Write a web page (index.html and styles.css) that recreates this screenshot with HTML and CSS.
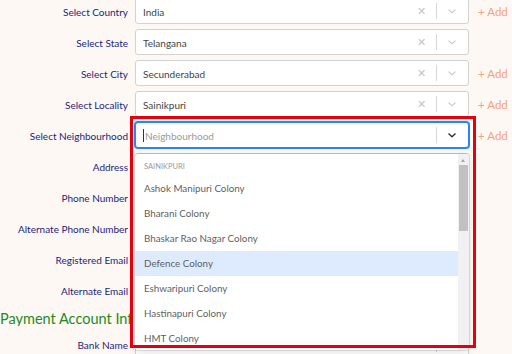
FILE: index.html
```html
<!DOCTYPE html>
<html lang="en">
<head>
    <meta charset="UTF-8">
    <title>Address details</title>
    <link rel="stylesheet" href="styles.css">
</head>
<body>
    <div class="form">
        <div class="row">
            <label>Select Country</label>
            <div class="select">
                <span class="value">India</span>
                <span class="clear">&#x2715;</span>
                <span class="sep"></span>
                <svg class="chev" viewBox="0 0 20 20"><path d="M5 8l5 4.5L15 8"/></svg>
            </div>
            <span class="add">+ Add</span>
        </div>
        <div class="row">
            <label>Select State</label>
            <div class="select">
                <span class="value">Telangana</span>
                <span class="clear">&#x2715;</span>
                <span class="sep"></span>
                <svg class="chev" viewBox="0 0 20 20"><path d="M5 8l5 4.5L15 8"/></svg>
            </div>
            <span></span>
        </div>
        <div class="row">
            <label>Select City</label>
            <div class="select">
                <span class="value">Secunderabad</span>
                <span class="clear">&#x2715;</span>
                <span class="sep"></span>
                <svg class="chev" viewBox="0 0 20 20"><path d="M5 8l5 4.5L15 8"/></svg>
            </div>
            <span class="add">+ Add</span>
        </div>
        <div class="row">
            <label>Select Locality</label>
            <div class="select">
                <span class="value">Sainikpuri</span>
                <span class="clear">&#x2715;</span>
                <span class="sep"></span>
                <svg class="chev" viewBox="0 0 20 20"><path d="M5 8l5 4.5L15 8"/></svg>
            </div>
            <span class="add">+ Add</span>
        </div>
        <div class="row open">
            <label>Select Neighbourhood</label>
            <div class="select focused">
                <span class="value placeholder"><i class="caret"></i>Neighbourhood</span>
                <span class="sep"></span>
                <svg class="chev" viewBox="0 0 20 20"><path d="M5 8l5 4.5L15 8"/></svg>
            </div>
            <span class="add">+ Add</span>

            <div class="menu">
                <div class="options">
                    <div class="group">Sainikpuri</div>
                    <div class="option">Ashok Manipuri Colony</div>
                    <div class="option">Bharani Colony</div>
                    <div class="option">Bhaskar Rao Nagar Colony</div>
                    <div class="option active">Defence Colony</div>
                    <div class="option">Eshwaripuri Colony</div>
                    <div class="option">Hastinapuri Colony</div>
                    <div class="option">HMT Colony</div>
                </div>
                <div class="scrollbar">
                    <span class="arrow"></span>
                    <span class="thumb"></span>
                </div>
            </div>
            <div class="highlight"></div>
        </div>
        <div class="row"><label>Address</label><div class="select"></div><span></span></div>
        <div class="row"><label>Phone Number</label><div class="select"></div><span></span></div>
        <div class="row"><label>Alternate Phone Number</label><div class="select"></div><span></span></div>
        <div class="row"><label>Registered Email</label><div class="select"></div><span></span></div>
        <div class="row"><label>Alternate Email</label><div class="select"></div><span></span></div>

        <h3>Payment Account Information</h3>

        <div class="row">
            <label>Bank Name</label>
            <div class="select">
                <span class="value"></span>
                <span class="sep"></span>
                <svg class="chev" viewBox="0 0 20 20"><path d="M5 8l5 4.5L15 8"/></svg>
            </div>
            <span></span>
        </div>
    </div>
</body>
</html>
```

FILE: styles.css
```css
body {
    margin: 0;
    background: #fdf8f4;
    font-family: 'Lato', 'Noto Sans', sans-serif;
    font-size: 10px;
    overflow: hidden;
}

.form {
    margin-top: -2px;
    display: flex;
    flex-direction: column;
    gap: 5px;
}

.row {
    position: relative;
    display: grid;
    grid-template-columns: 128px 334px 1fr;
    column-gap: 7px;
    align-items: center;
    height: 26px;
}

.row label {
    text-align: right;
    color: #24247a;
    padding-top: 1px;
}

.select {
    box-sizing: border-box;
    height: 26px;
    background: #fff;
    border: 1px solid #d2d2d2;
    border-radius: 3px;
    display: flex;
    align-items: center;
    padding-left: 7px;
}

.select.focused {
    border-color: #2684ff;
    box-shadow: 0 0 0 1px #2684ff;
}

.value {
    flex: 1;
    color: #444;
    padding-top: 1px;
}

.placeholder {
    color: #9a9a9a;
    display: flex;
    align-items: center;
}

.caret {
    width: 1px;
    height: 13px;
    background: #333;
    margin-right: 1px;
}

.clear {
    color: #c4c4c4;
    font-size: 11px;
    width: 14px;
    text-align: center;
    margin-right: 8px;
}

.sep {
    width: 1px;
    height: 16px;
    background: #d6d6d6;
}

.chev {
    width: 14px;
    height: 14px;
    margin: 0 9px 0 8px;
    fill: none;
    stroke: #c8c8c8;
    stroke-width: 1.5;
}

.focused .chev {
    stroke: #333;
    stroke-width: 2;
}

.add {
    color: #f7a27a;
    font-size: 11.5px;
    padding-left: 2px;
}

.menu {
    position: absolute;
    z-index: 10;
    top: 32px;
    left: 135px;
    width: 334px;
    height: 196px;
    background: #fff;
    border-radius: 3px;
    box-shadow: 0 0 0 1px rgba(0,0,0,0.1), 0 3px 8px rgba(0,0,0,0.1);
    display: flex;
    overflow: hidden;
}

.options {
    flex: 1;
    padding-top: 4px;
}

.group {
    color: #999;
    font-size: 7.5px;
    text-transform: uppercase;
    padding: 4px 9px 5px;
}

.option {
    height: 25px;
    line-height: 25px;
    padding-left: 9px;
    color: #5f5f5f;
    font-size: 9.8px;
}

.option.active {
    background: #deebff;
}

.scrollbar {
    width: 11px;
    background: #f1f1f1;
    position: relative;
}

.arrow {
    position: absolute;
    top: 5px;
    left: 3px;
    border: 2.5px solid transparent;
    border-bottom: 3px solid #a3a3a3;
    border-top: 0;
}

.thumb {
    position: absolute;
    top: 11px;
    left: 1px;
    width: 9px;
    height: 66px;
    background: #c1c1c1;
}

.highlight {
    position: absolute;
    z-index: 20;
    top: -6px;
    left: 130px;
    width: 340px;
    height: 226px;
    border: 3px solid #e3000f;
}

h3 {
    margin: 0;
    width: 130px;
    height: 18px;
    line-height: 21px;
    font-weight: normal;
    font-size: 14.5px;
    color: #1f8a1f;
    white-space: nowrap;
    overflow: hidden;
}
```
